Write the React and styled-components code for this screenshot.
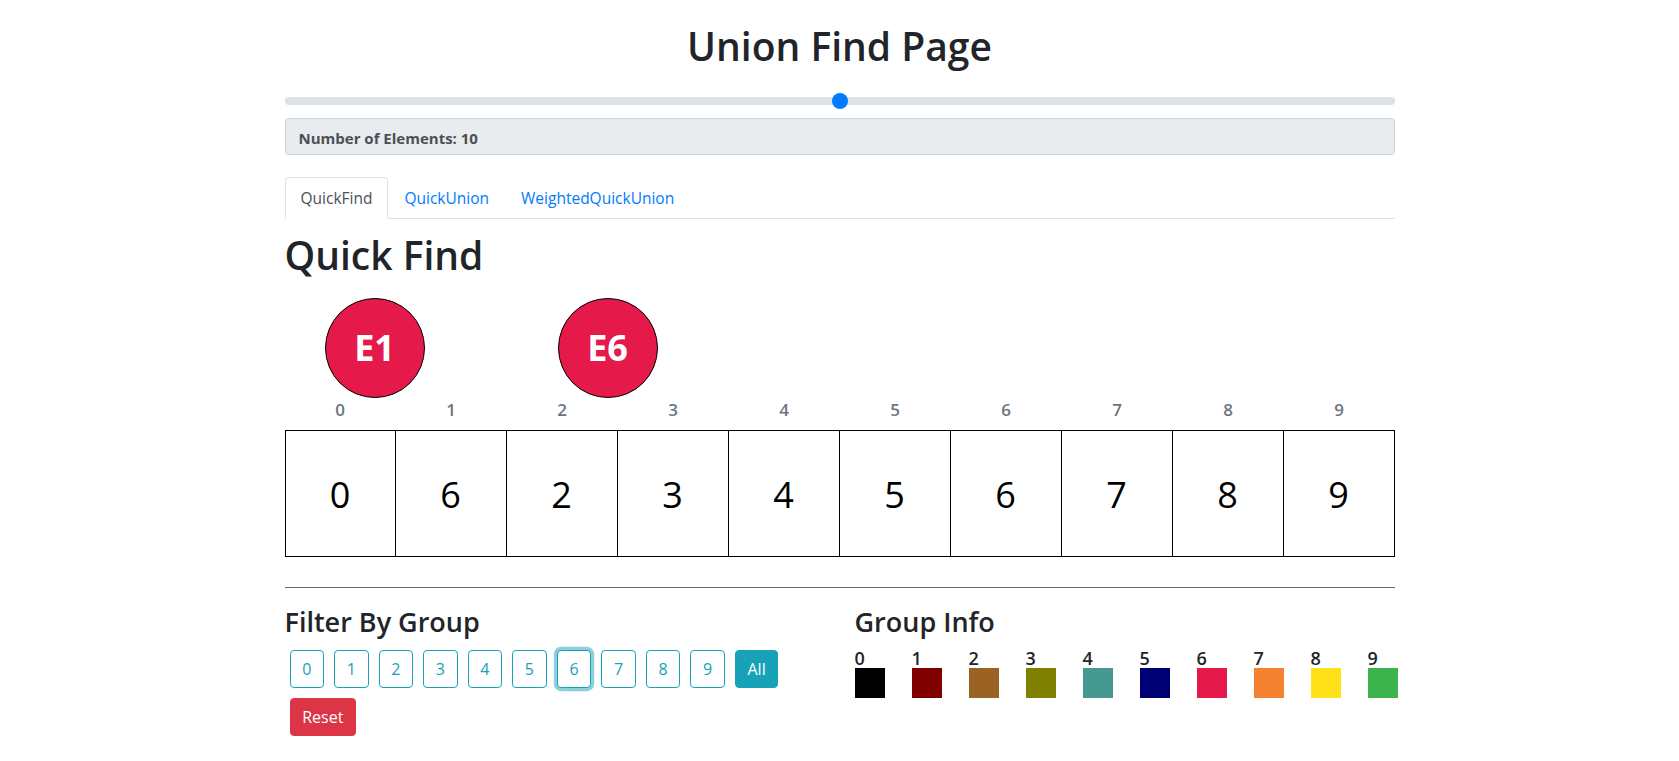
import React from "react";
import styled, { createGlobalStyle, css } from "styled-components";

const GlobalStyle = createGlobalStyle`
  html, body {
    margin: 0;
    padding: 0;
    background: #fff;
  }
  body {
    font-family: "Open Sans", "Noto Sans", "Liberation Sans", sans-serif;
    font-size: 16px;
    line-height: 1.5;
    color: #212529;
  }
  * {
    box-sizing: border-box;
  }
`;

const GROUP_COLORS = [
  "#000000",
  "#800000",
  "#9a6324",
  "#808000",
  "#469990",
  "#000075",
  "#e6194b",
  "#f58231",
  "#ffe119",
  "#3cb44b",
];

const ids = [0, 6, 2, 3, 4, 5, 6, 7, 8, 9];

const nodes = [
  { label: "E1", left: 40 },
  { label: "E6", left: 273 },
];

const Container = styled.div`
  max-width: 1140px;
  margin: 0 auto;
  padding: 0 15px;
`;

const Title = styled.h1`
  margin: 22px 0 0;
  font-size: 39px;
  font-weight: 600;
  line-height: 48px;
  text-align: center;
`;

const Range = styled.input`
  display: block;
  width: 100%;
  height: 22px;
  margin: 20px 0 0;
  padding: 0;
  background: transparent;
  -webkit-appearance: none;
  appearance: none;
  &::-webkit-slider-runnable-track {
    height: 8px;
    background: #dee2e6;
    border-radius: 16px;
    border: 0;
  }
  &::-webkit-slider-thumb {
    -webkit-appearance: none;
    appearance: none;
    width: 16px;
    height: 16px;
    margin-top: -4px;
    border: 0;
    border-radius: 50%;
    background: #007bff;
  }
  &:focus {
    outline: none;
  }
`;

const InfoBox = styled.div`
  margin-top: 6px;
  height: 37px;
  padding: 9px 13px 3px;
  background: #e9ecef;
  border: 1px solid #ced4da;
  border-radius: 4px;
  font-size: 15px;
  font-weight: 700;
  line-height: 21px;
  color: #495057;
`;

const TabNav = styled.ul`
  display: flex;
  list-style: none;
  margin: 22px 0 0;
  padding: 0;
  border-bottom: 1px solid #dee2e6;
`;

const Tab = styled.li`
  margin-bottom: -1px;
  padding: 8px 15px;
  border: 1px solid transparent;
  border-top-left-radius: 4px;
  border-top-right-radius: 4px;
  color: #007bff;
  font-size: 15.5px;
  line-height: 24px;
  cursor: pointer;
  ${(p) =>
    p.$active &&
    css`
      color: #495057;
      background: #fff;
      border-color: #dee2e6 #dee2e6 #fff;
    `}
`;

const SectionTitle = styled.h1`
  margin: 12px 0 0;
  font-size: 39px;
  font-weight: 600;
  line-height: 48px;
`;

const NodeArea = styled.div`
  position: relative;
  height: 119px;
`;

const Node = styled.div`
  position: absolute;
  top: 19px;
  width: 100px;
  height: 100px;
  border: 1px solid #000;
  border-radius: 50%;
  background: #e6194b;
  color: #fff;
  display: flex;
  align-items: center;
  justify-content: center;
  font-size: 36px;
  font-weight: 700;
  line-height: 1;
`;

const IndexRow = styled.div`
  display: grid;
  grid-template-columns: repeat(10, 1fr);
  height: 32px;
`;

const IndexLabel = styled.div`
  text-align: center;
  color: #6c757d;
  font-weight: 600;
  font-size: 17px;
  line-height: 24px;
`;

const CellRow = styled.div`
  display: grid;
  grid-template-columns: repeat(10, 1fr);
`;

const Cell = styled.div`
  height: 127px;
  border: 1px solid #000;
  border-left: 0;
  display: flex;
  align-items: center;
  justify-content: center;
  padding-top: 2px;
  font-size: 36px;
  font-weight: 500;
  line-height: 1;
  color: #000;
  &:first-child {
    border-left: 1px solid #000;
  }
`;

const Divider = styled.hr`
  margin: 30px 0 0;
  border: 0;
  border-top: 1px solid #6c6c6c;
`;

const BottomRow = styled.div`
  display: grid;
  grid-template-columns: minmax(0, 1fr) minmax(0, 1fr);
  column-gap: 30px;
  margin-top: 17px;
`;

const SubTitle = styled.h3`
  margin: 0 0 6px;
  font-size: 27px;
  font-weight: 600;
  line-height: 34px;
`;

const ButtonWrap = styled.div`
  display: flex;
  flex-wrap: wrap;
`;

const Button = styled.button`
  margin: 5px;
  height: 38px;
  padding: 6px 11.7px;
  border: 1px solid #17a2b8;
  border-radius: 4px;
  background: #fff;
  color: #17a2b8;
  font-family: inherit;
  font-size: 16px;
  line-height: 24px;
  cursor: pointer;
  ${(p) =>
    p.$focus &&
    css`
      box-shadow: 0 0 0 3.2px rgba(23, 162, 184, 0.5);
    `}
  ${(p) =>
    p.$variant === "info" &&
    css`
      background: #17a2b8;
      color: #fff;
    `}
  ${(p) =>
    p.$variant === "danger" &&
    css`
      background: #dc3545;
      border-color: #dc3545;
      color: #fff;
    `}
`;

const Legend = styled.div`
  display: flex;
  gap: 27px;
  padding-top: 3px;
`;

const LegendItem = styled.div`
  display: flex;
  flex-direction: column;
  width: 30px;
  flex-shrink: 0;
`;

const LegendLabel = styled.span`
  font-size: 18px;
  font-weight: 600;
  line-height: 20px;
`;

const Swatch = styled.div`
  width: 30px;
  height: 30px;
  background: ${(p) => p.$color};
`;

export default function App() {
  return (
    <>
      <GlobalStyle />
      <Container>
        <Title>Union Find Page</Title>
        <Range type="range" min={1} max={19} defaultValue={10} />
        <InfoBox>Number of Elements: 10</InfoBox>
        <TabNav>
          <Tab $active>QuickFind</Tab>
          <Tab>QuickUnion</Tab>
          <Tab>WeightedQuickUnion</Tab>
        </TabNav>
        <SectionTitle>Quick Find</SectionTitle>
        <NodeArea>
          {nodes.map((n) => (
            <Node key={n.label} style={{ left: n.left }}>
              {n.label}
            </Node>
          ))}
        </NodeArea>
        <IndexRow>
          {ids.map((_, i) => (
            <IndexLabel key={i}>{i}</IndexLabel>
          ))}
        </IndexRow>
        <CellRow>
          {ids.map((v, i) => (
            <Cell key={i}>{v}</Cell>
          ))}
        </CellRow>
        <Divider />
        <BottomRow>
          <div>
            <SubTitle>Filter By Group</SubTitle>
            <ButtonWrap>
              {ids.map((_, i) => (
                <Button key={i} $focus={i === 6}>
                  {i}
                </Button>
              ))}
              <Button $variant="info">All</Button>
              <Button $variant="danger">Reset</Button>
            </ButtonWrap>
          </div>
          <div>
            <SubTitle>Group Info</SubTitle>
            <Legend>
              {GROUP_COLORS.map((c, i) => (
                <LegendItem key={i}>
                  <LegendLabel>{i}</LegendLabel>
                  <Swatch $color={c} />
                </LegendItem>
              ))}
            </Legend>
          </div>
        </BottomRow>
      </Container>
    </>
  );
}
